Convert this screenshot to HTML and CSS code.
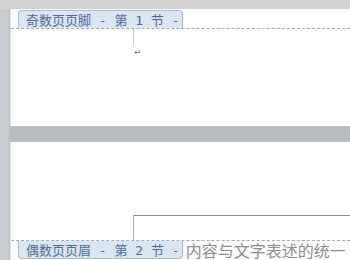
FILE: index.html
```html
<!DOCTYPE html>
<html>
<head>
    <title>页眉页脚</title>
    <link rel="stylesheet" href="styles.css">
</head>
<body>
    <div class="desk">
        <!-- page 1: footer area -->
        <div class="page page-one">
            <div class="hdr-zone">
                <span class="sec-tab tab-top">奇数页页脚 - 第 1 节 -</span>
            </div>
            <div class="body-zone">
                <div class="cursor-line"></div>
                <span class="return-mark">↵</span>
            </div>
        </div>

        <!-- page 2: header area -->
        <div class="page page-two">
            <div class="box-corner"></div>
            <div class="hdr-zone hdr-bottom">
                <span class="sec-tab tab-bottom">偶数页页眉 - 第 2 节 -</span>
                <span class="hdr-text">内容与文字表述的统一</span>
            </div>
        </div>
    </div>
</body>
</html>
```

FILE: styles.css
```css
/* General body styling */
body {
    margin: 0;
    background: #b9bcc0;
    font-family: "DejaVu Sans Mono", "Noto Sans CJK SC", monospace;
    overflow: hidden;
}

.desk {
    display: flex;
    flex-direction: column;
    gap: 16px;
    padding: 9px 0 0 11px;
    height: 260px;
    box-sizing: border-box;
    background:
        linear-gradient(to bottom, #d2d2d2 0, #d2d2d2 9px, transparent 9px),
        linear-gradient(to right, #c8cbd0 0, #c8cbd0 8px, #bcbfc4 10px, transparent 10px),
        #b9bcc0;
}

/* Page styling */
.page {
    background: #fff;
    box-shadow: -1px 0 0 #e6e6e6;
}

.page-one {
    height: 117px;
}

.page-two {
    flex: 1;
    display: flex;
    flex-direction: column;
    justify-content: flex-end;
    overflow: hidden;
}

/* Header / footer dashed zone */
.hdr-zone {
    display: flex;
    align-items: flex-end;
    padding-left: 7px;
    height: 19px;
    border-bottom: 1px dashed #9aabc0;
}

.hdr-bottom {
    align-items: flex-start;
    border-bottom: none;
    border-top: 1px dashed #9aabc0;
}

.sec-tab {
    display: flex;
    align-items: center;
    height: 17px;
    font-size: 13px;
    color: #4d6c96;
    background: #dbe6f4;
    border: 1px solid #a9bdd8;
    padding: 0 2px 0 7px;
    white-space: pre;
}

.tab-top {
    border-bottom: none;
    border-radius: 4px 4px 0 0;
}

.tab-bottom {
    border-top: none;
    border-radius: 0 0 4px 4px;
}

.hdr-text {
    font-family: "Noto Sans CJK SC", sans-serif;
    font-size: 16px;
    line-height: 18px;
    color: #8c8c8c;
    margin-left: 3px;
    white-space: nowrap;
}

/* Body area under the page 1 footer */
.body-zone {
    padding-left: 122px;
}

.cursor-line {
    width: 1px;
    height: 16px;
    background: #c8c8c8;
}

.return-mark {
    display: block;
    font-family: "DejaVu Sans", sans-serif;
    font-size: 9px;
    line-height: 10px;
    color: #777;
    margin: 2px 0 0 1px;
}

/* Table corner on page 2 */
.box-corner {
    margin-left: 122px;
    height: 24px;
    border-top: 1px solid #8a8a8a;
    border-left: 1px solid #b0b0b0;
}
```
